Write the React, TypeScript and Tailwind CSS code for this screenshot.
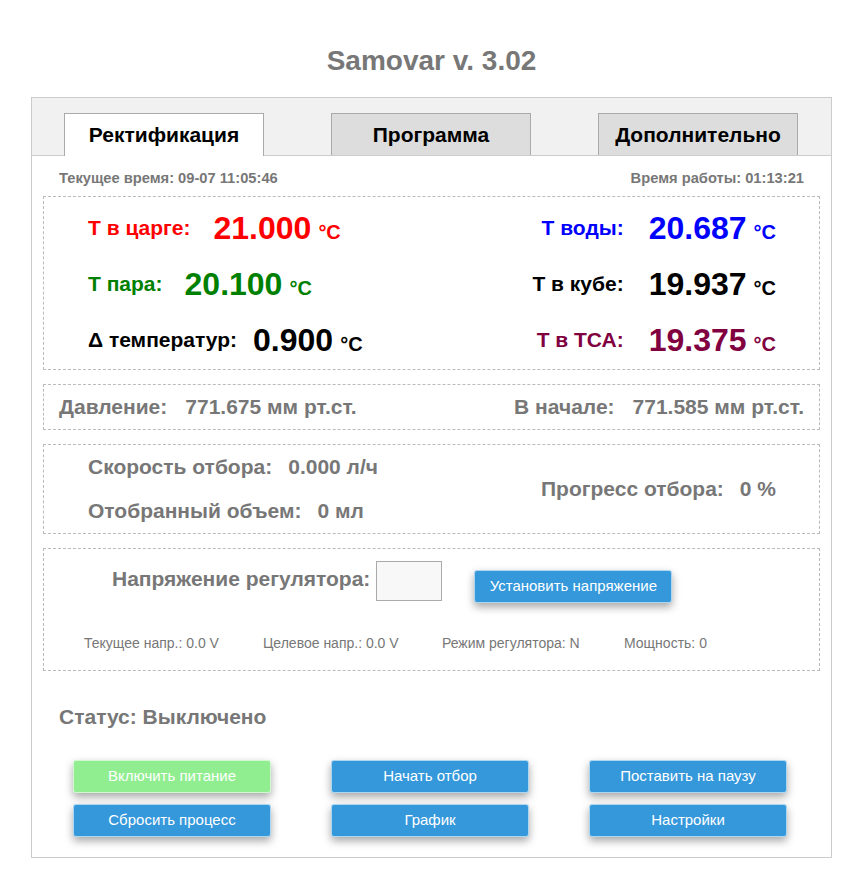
import React from 'react';

const gray = 'text-[#777]';

function Temp({ label, value, color, gap }: { label: string; value: string; color: string; gap?: string }) {
  return (
    <>
      <span className={`text-[21px] font-bold ${color}`}>{label}</span>
      <span className={`flex items-baseline gap-[7px] font-bold ${color} ${gap ?? ''}`}>
        <span className="text-[32px] leading-[36px]">{value}</span>
        <span className="text-[20px]">°C</span>
      </span>
    </>
  );
}

function Btn({ children, green }: { children: React.ReactNode; green?: boolean }) {
  return (
    <button
      className={`h-[33px] w-[198px] rounded-[3px] border border-white/60 text-[15px] text-white shadow-[0_4px_8px_rgba(0,0,0,0.35)] ${
        green ? 'bg-[#90ee90]' : 'bg-[#3498db]'
      }`}
    >
      {children}
    </button>
  );
}

export default function App() {
  return (
    <div className="min-h-screen bg-white font-['Liberation_Sans',Arial,sans-serif]">
      <div className="ml-[31px] w-[801px]">
        <h1 className={`pt-[45px] pb-[20px] text-center text-[28px] font-bold leading-[32px] ${gray}`}>
          Samovar v. 3.02
        </h1>

        <div className="border border-[#ccc]">
          {/* tabs */}
          <div className="flex h-[58px] items-end gap-[67px] border-b border-[#ccc] bg-[#f1f1f1] pl-[32px]">
            <div className="-mb-px flex h-[43px] w-[200px] items-center justify-center border border-b-0 border-[#aaa] bg-white text-[21px] font-bold text-black">
              Ректификация
            </div>
            <div className="flex h-[42px] w-[200px] items-center justify-center border border-b-0 border-[#aaa] bg-[#ddd] text-[21px] font-bold text-black">
              Программа
            </div>
            <div className="flex h-[42px] w-[200px] items-center justify-center border border-b-0 border-[#aaa] bg-[#ddd] text-[21px] font-bold text-black">
              Дополнительно
            </div>
          </div>

          <div className="px-[11px] pb-[20px]">
            <div className={`flex justify-between px-[16px] pt-[14px] pb-[10px] text-[14.7px] font-bold leading-[16px] ${gray}`}>
              <span>Текущее время: 09-07 11:05:46</span>
              <span>Время работы: 01:13:21</span>
            </div>

            {/* temperatures */}
            <div className="grid grid-cols-2 border border-dashed border-[#bbb] pt-[3px] pb-[1px]">
              <div className="flex flex-col pl-[44px] [&>div]:flex [&>div]:h-[56px] [&>div]:items-center">
                <div>
                  <Temp label="Т в царге:" value="21.000" color="text-[#ff0000]" gap="ml-[23px]" />
                </div>
                <div>
                  <Temp label="Т пара:" value="20.100" color="text-[#008000]" gap="ml-[22px]" />
                </div>
                <div>
                  <Temp label="Δ температур:" value="0.900" color="text-black" gap="ml-[16px]" />
                </div>
              </div>
              <div className="flex justify-end pr-[43px]">
                <div className="grid grid-cols-[auto_auto] items-center gap-x-[25px] [&>div]:flex [&>div]:h-[56px] [&>div]:items-center [&>div:nth-child(odd)]:justify-end">
                  <div><span className="text-[21px] font-bold text-[#0000ff]">Т воды:</span></div>
                  <div>
                    <span className="flex items-baseline gap-[7px] font-bold text-[#0000ff]">
                      <span className="text-[32px] leading-[36px]">20.687</span>
                      <span className="text-[20px]">°C</span>
                    </span>
                  </div>
                  <div><span className="text-[21px] font-bold text-black">Т в кубе:</span></div>
                  <div>
                    <span className="flex items-baseline gap-[7px] font-bold text-black">
                      <span className="text-[32px] leading-[36px]">19.937</span>
                      <span className="text-[20px]">°C</span>
                    </span>
                  </div>
                  <div><span className="text-[21px] font-bold text-[#800040]">Т в ТСА:</span></div>
                  <div>
                    <span className="flex items-baseline gap-[7px] font-bold text-[#800040]">
                      <span className="text-[32px] leading-[36px]">19.375</span>
                      <span className="text-[20px]">°C</span>
                    </span>
                  </div>
                </div>
              </div>
            </div>

            {/* pressure */}
            <div className={`mt-[14px] flex h-[46px] items-center justify-between border border-dashed border-[#bbb] px-[15px] text-[21px] font-bold ${gray}`}>
              <span>
                Давление:<span className="ml-[18px]">771.675 мм рт.ст.</span>
              </span>
              <span>
                В начале:<span className="ml-[18px]">771.585 мм рт.ст.</span>
              </span>
            </div>

            {/* flow */}
            <div className={`mt-[14px] grid h-[90px] grid-cols-2 border border-dashed border-[#bbb] text-[21px] font-bold leading-[24px] ${gray}`}>
              <div className="flex flex-col justify-center gap-[20px] pl-[44px]">
                <span>
                  Скорость отбора:<span className="ml-[16px]">0.000 л/ч</span>
                </span>
                <span>
                  Отобранный объем:<span className="ml-[16px]">0 мл</span>
                </span>
              </div>
              <div className="flex items-center justify-end pr-[43px]">
                <span>
                  Прогресс отбора:<span className="ml-[16px]">0 %</span>
                </span>
              </div>
            </div>

            {/* voltage */}
            <div className="mt-[14px] border border-dashed border-[#bbb] pt-[12px] pb-[19px]">
              <div className="flex items-start pl-[68px]">
                <span className={`mt-[6px] text-[21px] font-bold leading-[24px] ${gray}`}>Напряжение регулятора:</span>
                <input className="ml-[6px] h-[40px] w-[66px] border border-[#aaa] bg-[#f8f8f8]" />
                <button className="mt-[9px] ml-[32px] h-[33px] w-[198px] rounded-[3px] border border-white/60 bg-[#3498db] text-[15px] text-white shadow-[0_4px_8px_rgba(0,0,0,0.35)]">
                  Установить напряжение
                </button>
              </div>
              <div className="mt-[32px] grid grid-cols-[179px_179px_182px_auto] pl-[40px] text-[14px] leading-[16px] text-[#777]">
                <span>Текущее напр.: 0.0 V</span>
                <span>Целевое напр.: 0.0 V</span>
                <span>Режим регулятора: N</span>
                <span>Мощность: 0</span>
              </div>
            </div>

            <div className={`mt-[34px] pl-[16px] text-[21px] font-bold leading-[24px] ${gray}`}>Статус: Выключено</div>

            <div className="mt-[31px] grid grid-cols-[198px_198px_198px] gap-x-[60px] gap-y-[11px] pl-[30px]">
              <Btn green>Включить питание</Btn>
              <Btn>Начать отбор</Btn>
              <Btn>Поставить на паузу</Btn>
              <Btn>Сбросить процесс</Btn>
              <Btn>График</Btn>
              <Btn>Настройки</Btn>
            </div>
          </div>
        </div>
      </div>
    </div>
  );
}
